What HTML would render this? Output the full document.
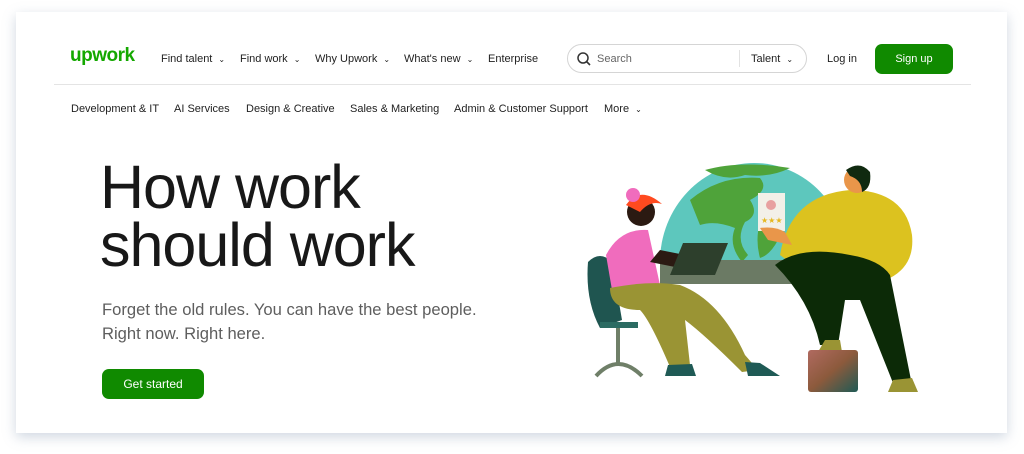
<!DOCTYPE html>
<html><head><style>
body{margin:0;width:1024px;height:454px;background:#fff;position:relative;overflow:hidden;font-family:"Liberation Sans",sans-serif;color:#1f1f1f}
.card{position:absolute;left:16px;top:12px;width:991px;height:421px;background:#fff;box-shadow:0 4px 12px rgba(120,140,170,.35)}
.a{position:absolute;white-space:nowrap}
.nav{font-size:11px;top:53px;color:#1f1f1f}
.cat{font-size:11px;top:103px}
.chev{font-size:8px;margin-left:3px}
</style></head><body>
<div class="card"></div>
<div class="a" style="left:70px;top:45px;font-size:19px;font-weight:bold;color:#14a800;letter-spacing:-0.5px">upwork</div>
<div class="a nav" style="left:161px">Find talent <span class="chev">⌄</span></div>
<div class="a nav" style="left:240px">Find work <span class="chev">⌄</span></div>
<div class="a nav" style="left:315px">Why Upwork <span class="chev">⌄</span></div>
<div class="a nav" style="left:404px">What's new <span class="chev">⌄</span></div>
<div class="a nav" style="left:488px">Enterprise</div>
<div class="a" style="left:567px;top:44px;width:240px;height:29px;border:1px solid #d5d5d5;border-radius:16px;box-sizing:border-box"></div>
<svg class="a" style="left:576px;top:51px" width="16" height="16" viewBox="0 0 16 16"><circle cx="7" cy="7" r="5" fill="none" stroke="#333" stroke-width="1.5"/><line x1="10.5" y1="10.5" x2="14" y2="14" stroke="#333" stroke-width="1.6"/></svg>
<div class="a nav" style="left:597px;color:#666">Search</div>
<div class="a" style="left:739px;top:50px;width:1px;height:17px;background:#e2e2e2"></div>
<div class="a nav" style="left:751px">Talent <span class="chev">⌄</span></div>
<div class="a nav" style="left:827px">Log in</div>
<div class="a" style="left:875px;top:44px;width:78px;height:30px;background:#108a00;border-radius:7px;color:#fff;font-size:11px;text-align:center;line-height:30px">Sign up</div>
<div class="a" style="left:54px;top:84px;width:917px;height:1px;background:#e4e4e4"></div>
<div class="a cat" style="left:71px">Development &amp; IT</div>
<div class="a cat" style="left:174px">AI Services</div>
<div class="a cat" style="left:246px">Design &amp; Creative</div>
<div class="a cat" style="left:350px">Sales &amp; Marketing</div>
<div class="a cat" style="left:454px">Admin &amp; Customer Support</div>
<div class="a cat" style="left:604px">More <span class="chev">⌄</span></div>
<div class="a" style="left:100px;top:158px;font-size:61px;line-height:58px;letter-spacing:-1px;color:#181818">How work<br>should work</div>
<div class="a" style="left:102px;top:298px;font-size:16.6px;line-height:24px;color:#5e5e5e">Forget the old rules. You can have the best people.<br>Right now. Right here.</div>
<div class="a" style="left:102px;top:369px;width:102px;height:30px;background:#108a00;border-radius:7px;color:#fff;font-size:12px;text-align:center;line-height:30px">Get started</div>
<svg class="a" style="left:0;top:0" width="1024" height="454" viewBox="0 0 1024 454">
<defs><linearGradient id="bc" x1="0" y1="0" x2="1" y2="1"><stop offset="0" stop-color="#b06a60"/><stop offset=".5" stop-color="#8c5a3c"/><stop offset="1" stop-color="#1f5a55"/></linearGradient></defs>
<path d="M660 262 A93 98 0 0 1 848 262 Z" fill="#5dc7bd"/>
<path d="M690 200 Q720 175 760 178 Q770 190 750 200 Q760 215 745 222 Q735 240 748 255 L742 262 Q728 245 735 228 Q715 220 700 225 Z" fill="#4fa33a"/>
<path d="M760 222 Q780 222 778 240 Q770 255 760 258 Q755 240 760 222Z" fill="#4fa33a"/>
<path d="M705 170 Q740 160 790 168 Q770 178 745 175 Q725 182 705 170Z" fill="#4fa33a"/>
<rect x="660" y="260" width="190" height="24" fill="#6b7a64"/>
<path d="M588 262 Q600 250 612 262 L622 320 L600 328 Q585 300 588 262Z" fill="#1f5550"/>
<rect x="600" y="322" width="38" height="6" fill="#2b6b62"/>
<rect x="616" y="328" width="4" height="35" fill="#6f7f68"/>
<path d="M596 376 Q618 352 642 376" fill="none" stroke="#6f7f68" stroke-width="4"/>
<path d="M606 255 Q620 228 648 230 L660 285 L612 290 Z" fill="#f06cbd"/>
<path d="M610 288 Q650 280 680 285 Q720 300 745 355 L758 370 L742 372 Q705 335 685 320 L690 365 L670 367 Q650 320 640 310 Q610 310 610 288Z" fill="#9a9434"/>
<path d="M668 365 L692 364 L696 376 L665 376Z" fill="#1f5a55"/>
<path d="M745 362 L760 363 L780 376 L748 376Z" fill="#1f5a55"/>
<circle cx="641" cy="212" r="14" fill="#2b1a12"/>
<path d="M626 205 Q640 185 662 204 Q650 200 640 212 Z" fill="#ff4a1f"/>
<circle cx="633" cy="195" r="7" fill="#f06cbd"/>
<path d="M650 262 L690 270 L700 258 L660 250 Z" fill="#2b1a12"/>
<path d="M683 243 L728 243 L715 275 L670 275 Z" fill="#2d3f2c"/>
<path d="M780 255 Q790 195 850 190 Q905 190 912 235 Q915 265 890 278 L800 270 Z" fill="#dcc21f"/>
<path d="M775 265 Q800 245 850 255 Q880 260 890 275 L912 385 L895 388 L860 300 L845 300 L838 345 L820 345 Q810 300 775 265Z" fill="#0c2a07"/>
<path d="M825 340 L840 340 L842 352 L818 352Z" fill="#9a9434"/>
<path d="M893 380 L912 378 L918 392 L888 392Z" fill="#9a9434"/>
<rect x="808" y="350" width="50" height="42" rx="3" fill="url(#bc)"/>
<circle cx="857" cy="180" r="13" fill="#e9964a"/>
<path d="M846 170 Q860 160 870 172 Q872 188 862 192 Q862 180 850 176Z" fill="#102a10"/>
<rect x="758" y="193" width="27" height="38" fill="#f3f0e8"/>
<circle cx="771" cy="205" r="5" fill="#e8a0a0"/>
<text x="761" y="223" font-size="8" fill="#e6b820">★★★</text>
<path d="M760 228 Q775 226 785 232 L792 245 L768 240 Z" fill="#e9964a"/>
</svg>
</body></html>
